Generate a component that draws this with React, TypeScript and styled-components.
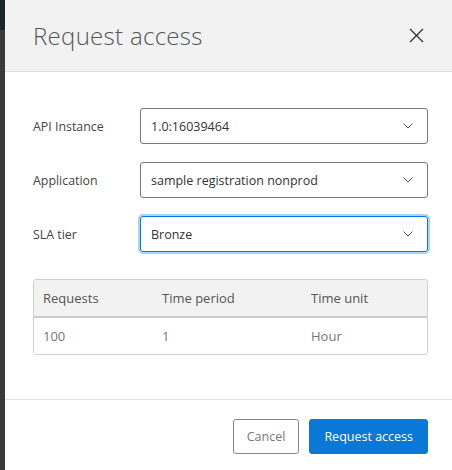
import React from "react";
import styled, { createGlobalStyle } from "styled-components";

const Global = createGlobalStyle`
  html, body { margin: 0; padding: 0; background: #3a3a3a; }
  body { font-family: "Open Sans", "Liberation Sans", sans-serif; }
  * { box-sizing: border-box; }
`;

const Page = styled.div`
  display: flex;
  width: 452px;
  height: 470px;
  overflow: hidden;
`;

const Backdrop = styled.div`
  width: 5px;
  flex: none;
  background: linear-gradient(#1c262c 0, #1c262c 30px, #3a3a3a 30px);
`;

const Modal = styled.div`
  flex: 1;
  background: #ffffff;
  display: flex;
  flex-direction: column;
`;

const Header = styled.div`
  height: 72px;
  flex: none;
  background: #f2f2f2;
  border-bottom: 1px solid #e0e0e0;
  display: flex;
  align-items: center;
  justify-content: space-between;
  padding: 0 28px 0 28px;
`;

const Title = styled.h1`
  margin: 0;
  font-family: "Open Sans", sans-serif;
  font-weight: 300;
  font-size: 24px;
  color: #555555;
  letter-spacing: 0.3px;
  padding-bottom: 1px;
`;

const CloseButton = styled.button`
  border: 0;
  background: transparent;
  padding: 0;
  width: 16px;
  height: 16px;
  display: flex;
  align-items: center;
  justify-content: center;
  cursor: pointer;
`;

const Body = styled.div`
  padding: 36px 24px 0 28px;
  display: flex;
  flex-direction: column;
  gap: 18px;
  height: 328px;
  flex: none;
  border-bottom: 1px solid #e2e2e2;
`;

const Row = styled.div`
  display: flex;
  align-items: center;
  height: 36px;
`;

const Label = styled.div`
  width: 107px;
  flex: none;
  font-size: 12.4px;
  color: #444444;
`;

const Select = styled.div<{ $focused?: boolean }>`
  flex: 1;
  height: 36px;
  border: 1px solid ${(p) => (p.$focused ? "#0a78d6" : "#7a7a7a")};
  border-radius: 3px;
  box-shadow: ${(p) => (p.$focused ? "0 0 0 2px #a9d4f7" : "none")};
  display: flex;
  align-items: center;
  justify-content: space-between;
  padding: 0 14px 0 10px;
  font-size: 12.5px;
  color: #333333;
`;

const Table = styled.div`
  margin-top: 9px;
  border: 1px solid #cfcfcf;
  border-radius: 3px;
  overflow: hidden;
`;

const TableRow = styled.div<{ $head?: boolean }>`
  display: grid;
  grid-template-columns: 119px 149px 1fr;
  height: ${(p) => (p.$head ? "38px" : "36px")};
  align-items: center;
  padding-left: 9px;
  background: ${(p) => (p.$head ? "#f2f2f2" : "#ffffff")};
  border-bottom: ${(p) => (p.$head ? "2px solid #cccccc" : "0")};
  font-size: 13px;
  color: ${(p) => (p.$head ? "#555555" : "#777777")};
`;

const Footer = styled.div`
  display: flex;
  justify-content: flex-end;
  gap: 10px;
  padding: 19px 24px 0 0;
`;

const Button = styled.button<{ $primary?: boolean }>`
  height: 35px;
  border-radius: 3px;
  font-family: "Open Sans", sans-serif;
  font-size: 12.5px;
  padding: 0 ${(p) => (p.$primary ? "14px" : "13px")};
  border: 1px solid ${(p) => (p.$primary ? "#0a78d6" : "#888888")};
  background: ${(p) => (p.$primary ? "#0a78d6" : "#ffffff")};
  color: ${(p) => (p.$primary ? "#ffffff" : "#777777")};
  font-weight: 400;
  cursor: pointer;
`;

const Chevron = () => (
  <svg width="10" height="6" viewBox="0 0 10 6" fill="none">
    <path d="M0.5 0.5 L5 5 L9.5 0.5" stroke="#555" strokeWidth="1" />
  </svg>
);

const fields = [
  { label: "API Instance", value: "1.0:16039464" },
  { label: "Application", value: "sample registration nonprod" },
  { label: "SLA tier", value: "Bronze", focused: true },
];

export default function App() {
  return (
    <>
      <Global />
      <Page>
        <Backdrop />
        <Modal>
          <Header>
            <Title>Request access</Title>
            <CloseButton aria-label="Close">
              <svg width="15" height="15" viewBox="0 0 15 15">
                <path d="M1 1 L14 14 M14 1 L1 14" stroke="#333" strokeWidth="1.3" />
              </svg>
            </CloseButton>
          </Header>
          <Body>
            {fields.map((f) => (
              <Row key={f.label}>
                <Label>{f.label}</Label>
                <Select $focused={f.focused}>
                  <span>{f.value}</span>
                  <Chevron />
                </Select>
              </Row>
            ))}
            <Table>
              <TableRow $head>
                <span>Requests</span>
                <span>Time period</span>
                <span>Time unit</span>
              </TableRow>
              <TableRow>
                <span>100</span>
                <span>1</span>
                <span>Hour</span>
              </TableRow>
            </Table>
          </Body>
          <Footer>
            <Button>Cancel</Button>
            <Button $primary>Request access</Button>
          </Footer>
        </Modal>
      </Page>
    </>
  );
}
